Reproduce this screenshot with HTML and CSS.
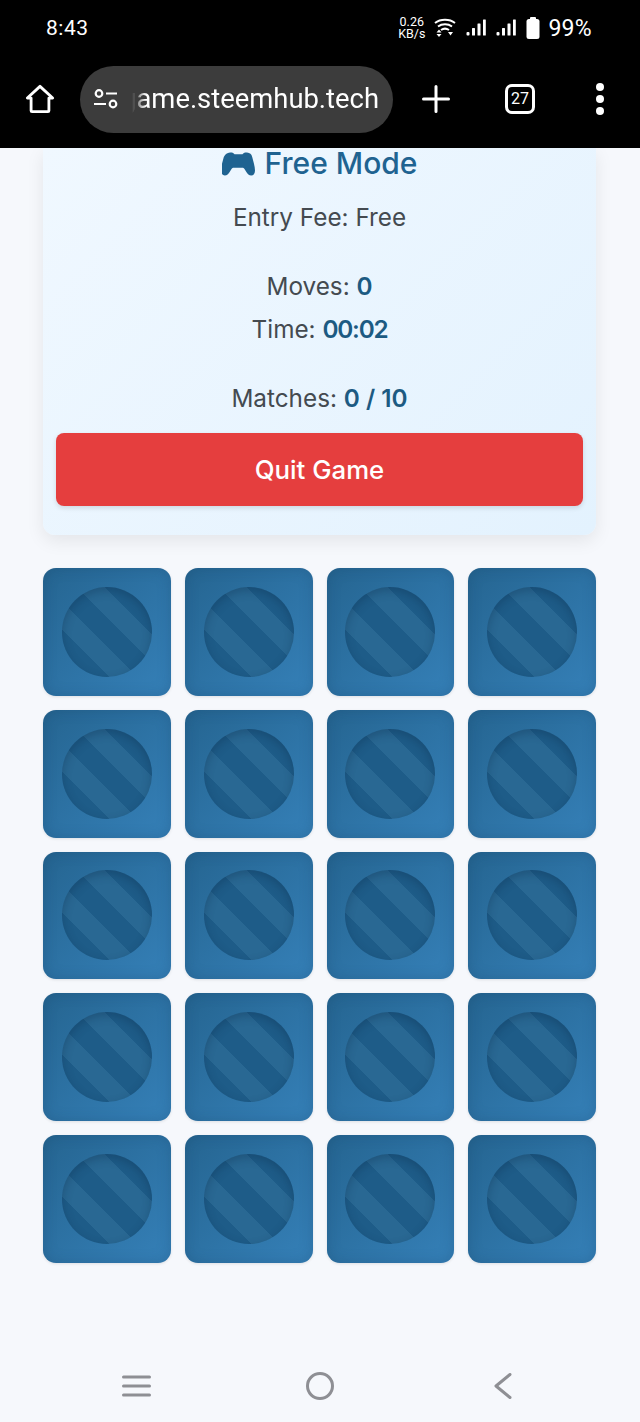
FILE: index.html
```html
<!DOCTYPE html>
<html lang="en">
<head>
    <meta charset="UTF-8">
    <meta name="viewport" content="width=device-width, initial-scale=1.0">
    <title>Free Mode</title>
    <link rel="stylesheet" href="styles.css">
</head>
<body>
    <header class="chrome">
        <div class="status-bar">
            <span class="clock">8:43</span>
            <div class="status-icons">
                <span class="net-speed">0.26<br>KB/s</span>
                <svg class="wifi" width="22" height="20" viewBox="0 0 22 20" fill="none" stroke="#fff" stroke-width="2">
                    <path d="M1 5C6.500 0.800 15.500 0.800 21 5"/>
                    <path d="M4 8.500C8 5.500 14 5.500 18 8.500"/>
                    <path d="M7 12C9.500 10.300 12.500 10.300 15 12"/>
                    <path d="M2.500 14.500h5L5 11.500zM2.500 16h5L5 19zM14 14h5l-2.500 3.500z" fill="#fff" stroke="none"/>
                </svg>
                <svg width="20" height="18" viewBox="0 0 20 18" fill="#fff">
                    <rect x="0.500" y="13" width="3" height="3.500" rx="1"/>
                    <rect x="6" y="9" width="3" height="7.500" rx="0.500"/>
                    <rect x="11.500" y="4.500" width="3" height="12" rx="0.500"/>
                    <rect x="17" y="0.500" width="2.800" height="16" rx="0.500"/>
                </svg>
                <svg width="20" height="18" viewBox="0 0 20 18" fill="#fff">
                    <rect x="0.500" y="13" width="3" height="3.500" rx="1"/>
                    <rect x="6" y="9" width="3" height="7.500" rx="0.500"/>
                    <rect x="11.500" y="4.500" width="3" height="12" rx="0.500"/>
                    <rect x="17" y="0.500" width="2.800" height="16" rx="0.500"/>
                </svg>
                <svg width="14" height="22" viewBox="0 0 14 22" fill="#fff">
                    <rect x="4" y="0" width="6" height="3" rx="1"/>
                    <rect x="0.500" y="2" width="13" height="20" rx="2.500"/>
                </svg>
                <span class="battery">99%</span>
            </div>
        </div>
        <div class="toolbar">
            <svg class="home-icon" width="30" height="30" viewBox="0 0 32 32" fill="none" stroke="#fff" stroke-width="3" stroke-linejoin="round">
                <path d="M2.500 15L16 2.500 29.500 15h-4v13.500a1 1 0 0 1-1 1h-17a1 1 0 0 1-1-1V15z"/>
            </svg>
            <div class="url-pill">
                <svg width="26" height="22" viewBox="0 0 26 22" fill="none" stroke="#fff" stroke-width="2.200">
                    <circle cx="6" cy="5.500" r="3.300"/>
                    <path d="M13 5.500h11M1 16h12"/>
                    <circle cx="20" cy="16" r="3.300"/>
                </svg>
                <div class="url-clip"><span class="url-text">game.steemhub.tech</span></div>
            </div>
            <svg class="plus-icon" width="28" height="28" viewBox="0 0 28 28" stroke="#fff" stroke-width="3" stroke-linecap="round">
                <path d="M14 1.500v25M1.500 14h25"/>
            </svg>
            <div class="tab-count">27</div>
            <div class="dots"><i></i><i></i><i></i></div>
        </div>
    </header>

    <main class="page">
        <section class="panel">
            <h2 class="mode-title">
                <svg width="33" height="24" viewBox="0 0 33 24" fill="#1f6391">
                    <path d="M8 0.500C10 0.200 11.500 0.800 12.500 2.200h8C21.500 0.800 23 0.200 25 0.500c3 .4 4.500 1.500 5.200 4.500 1 4 2.800 9.500 2.800 13.500 0 3-1.500 5-3.800 5-2.200 0-3.700-1.500-5-3.800l-1.700-2.700c-.6-1-1.200-1.300-2.500-1.300h-8c-1.300 0-1.900.3-2.500 1.300l-1.700 2.700c-1.300 2.300-2.800 3.800-5 3.800-2.300 0-3.800-2-3.800-5 0-4 1.800-9.500 2.800-13.500C3.500 2 5 .9 8 .5z"/>
                </svg>
                Free Mode
            </h2>
            <p class="fee">Entry Fee: Free</p>
            <p class="stat stat-moves">Moves: <b>0</b></p>
            <p class="stat stat-time">Time: <b>00:02</b></p>
            <p class="stat stat-matches">Matches: <b>0 / 10</b></p>
            <button class="quit-btn">Quit Game</button>
        </section>

        <section class="board">
            <div class="tile"><span class="disc"></span></div>
            <div class="tile"><span class="disc"></span></div>
            <div class="tile"><span class="disc"></span></div>
            <div class="tile"><span class="disc"></span></div>
            <div class="tile"><span class="disc"></span></div>
            <div class="tile"><span class="disc"></span></div>
            <div class="tile"><span class="disc"></span></div>
            <div class="tile"><span class="disc"></span></div>
            <div class="tile"><span class="disc"></span></div>
            <div class="tile"><span class="disc"></span></div>
            <div class="tile"><span class="disc"></span></div>
            <div class="tile"><span class="disc"></span></div>
            <div class="tile"><span class="disc"></span></div>
            <div class="tile"><span class="disc"></span></div>
            <div class="tile"><span class="disc"></span></div>
            <div class="tile"><span class="disc"></span></div>
            <div class="tile"><span class="disc"></span></div>
            <div class="tile"><span class="disc"></span></div>
            <div class="tile"><span class="disc"></span></div>
            <div class="tile"><span class="disc"></span></div>
        </section>
    </main>

    <footer class="nav-bar">
        <svg width="29" height="22" viewBox="0 0 29 22" stroke="#8e8f94" stroke-width="3" stroke-linecap="round">
            <path d="M1.500 2h26M1.500 11h26M1.500 20h26"/>
        </svg>
        <svg width="28" height="28" viewBox="0 0 28 28" fill="none" stroke="#8e8f94" stroke-width="3">
            <circle cx="14" cy="14" r="12.500"/>
        </svg>
        <svg width="18" height="26" viewBox="0 0 18 26" fill="none" stroke="#8e8f94" stroke-width="3" stroke-linecap="round" stroke-linejoin="round">
            <path d="M16 1.500L2 13l14 11.500"/>
        </svg>
    </footer>
</body>
</html>
```

FILE: styles.css
```css
html, body { margin: 0; padding: 0; }
body { width: 640px; height: 1422px; overflow: hidden; display: flex; flex-direction: column; background: #f6f8fc; font-family: Inter, "Noto Sans", sans-serif; color: #444a50; }

.chrome { height: 148px; flex: none; background: #000; color: #fff; position: relative; z-index: 2; }
.status-bar { height: 66px; display: flex; justify-content: space-between; align-items: center; padding: 0 48px 10px 46px; box-sizing: border-box; }
.clock { font-size: 21px; font-family: Roboto, sans-serif; letter-spacing: 0.5px; }
.status-icons { display: flex; align-items: center; gap: 10px; }
.net-speed { font-size: 12.500px; line-height: 12px; text-align: center; font-family: Roboto, sans-serif; margin-right: -1px; }
.battery { font-size: 23px; font-family: Roboto, sans-serif; letter-spacing: 0.3px; margin-left: -2px; }
.toolbar { height: 66px; display: flex; align-items: center; position: relative; }
.home-icon { margin-left: 25px; flex: none; }
.url-pill { width: 313px; height: 67px; margin-left: 25px; flex: none; box-sizing: border-box; padding-left: 13px; display: flex; align-items: center; gap: 13px; background: #3c3c3c; border-radius: 34px; }
.url-clip { width: 247px; overflow: hidden; white-space: nowrap; direction: rtl; -webkit-mask-image: linear-gradient(to right, transparent 0, #000 14px); mask-image: linear-gradient(to right, transparent 0, #000 14px); }
.url-text { font-family: Roboto, sans-serif; font-size: 27.400px; color: #fff; direction: ltr; unicode-bidi: embed; }
.plus-icon { margin-left: 29px; flex: none; }
.tab-count { width: 24px; height: 24px; margin-left: 55px; flex: none; border: 3px solid #fff; border-radius: 7px; font-family: Roboto, sans-serif; font-size: 16px; line-height: 24px; text-align: center; }
.dots { margin-left: 61px; display: flex; flex-direction: column; gap: 4px; }
.dots i { display: block; width: 8px; height: 8px; border-radius: 50%; background: #fff; }

.page { flex: 1; padding: 0 44px 0 43px; }
.panel { padding: 0 13px 29px; text-align: center; background: linear-gradient(135deg, #f0f8ff, #e3f2fe); border-radius: 0 0 12px 12px; box-shadow: 0 6px 18px rgba(0, 0, 0, 0.08); }
.mode-title { margin: 0; height: 31px; display: flex; justify-content: center; align-items: center; gap: 10px; font-size: 30px; line-height: 31px; font-weight: 500; color: #1f6391; }
.fee { margin: 23px 0 0; font-size: 24.300px; line-height: 30px; }
.stat { margin: 0; font-size: 24.300px; line-height: 30px; padding-top: 13px; }
.stat-moves { padding-top: 39px; }
.stat-matches { padding-top: 39px; }
.stat b { font-weight: 600; color: #1c5a82; }
.stat-time b { letter-spacing: -1.200px; }
.quit-btn { display: block; width: 100%; height: 73px; margin-top: 20px; border: none; border-radius: 8px; background: #e53e3e; color: #fff; font-family: inherit; font-size: 25.800px; font-weight: 500; box-shadow: 0 2px 5px rgba(0, 0, 0, 0.12); }

.board { margin-top: 33px; display: grid; grid-template-columns: repeat(4, 1fr); gap: 14px; }
.tile { aspect-ratio: 1; display: flex; align-items: center; justify-content: center; border-radius: 13px; background: linear-gradient(135deg, #256591, #3580b8); box-shadow: inset 0 0 14px rgba(20, 60, 95, 0.25), 0 1px 3px rgba(0, 0, 0, 0.1); }
.disc { width: 90px; height: 90px; border-radius: 50%; background: repeating-linear-gradient(45deg, #296893 0 13.600px, #1e5c88 13.600px 33.600px, #296893 33.600px 40px); box-shadow: inset 0 4px 10px rgba(10, 40, 70, 0.3); }

.nav-bar { height: 72px; flex: none; display: flex; align-items: center; gap: 155px; padding-left: 122px; box-sizing: border-box; }
.nav-bar svg:last-child { margin-left: 5px; }
```
